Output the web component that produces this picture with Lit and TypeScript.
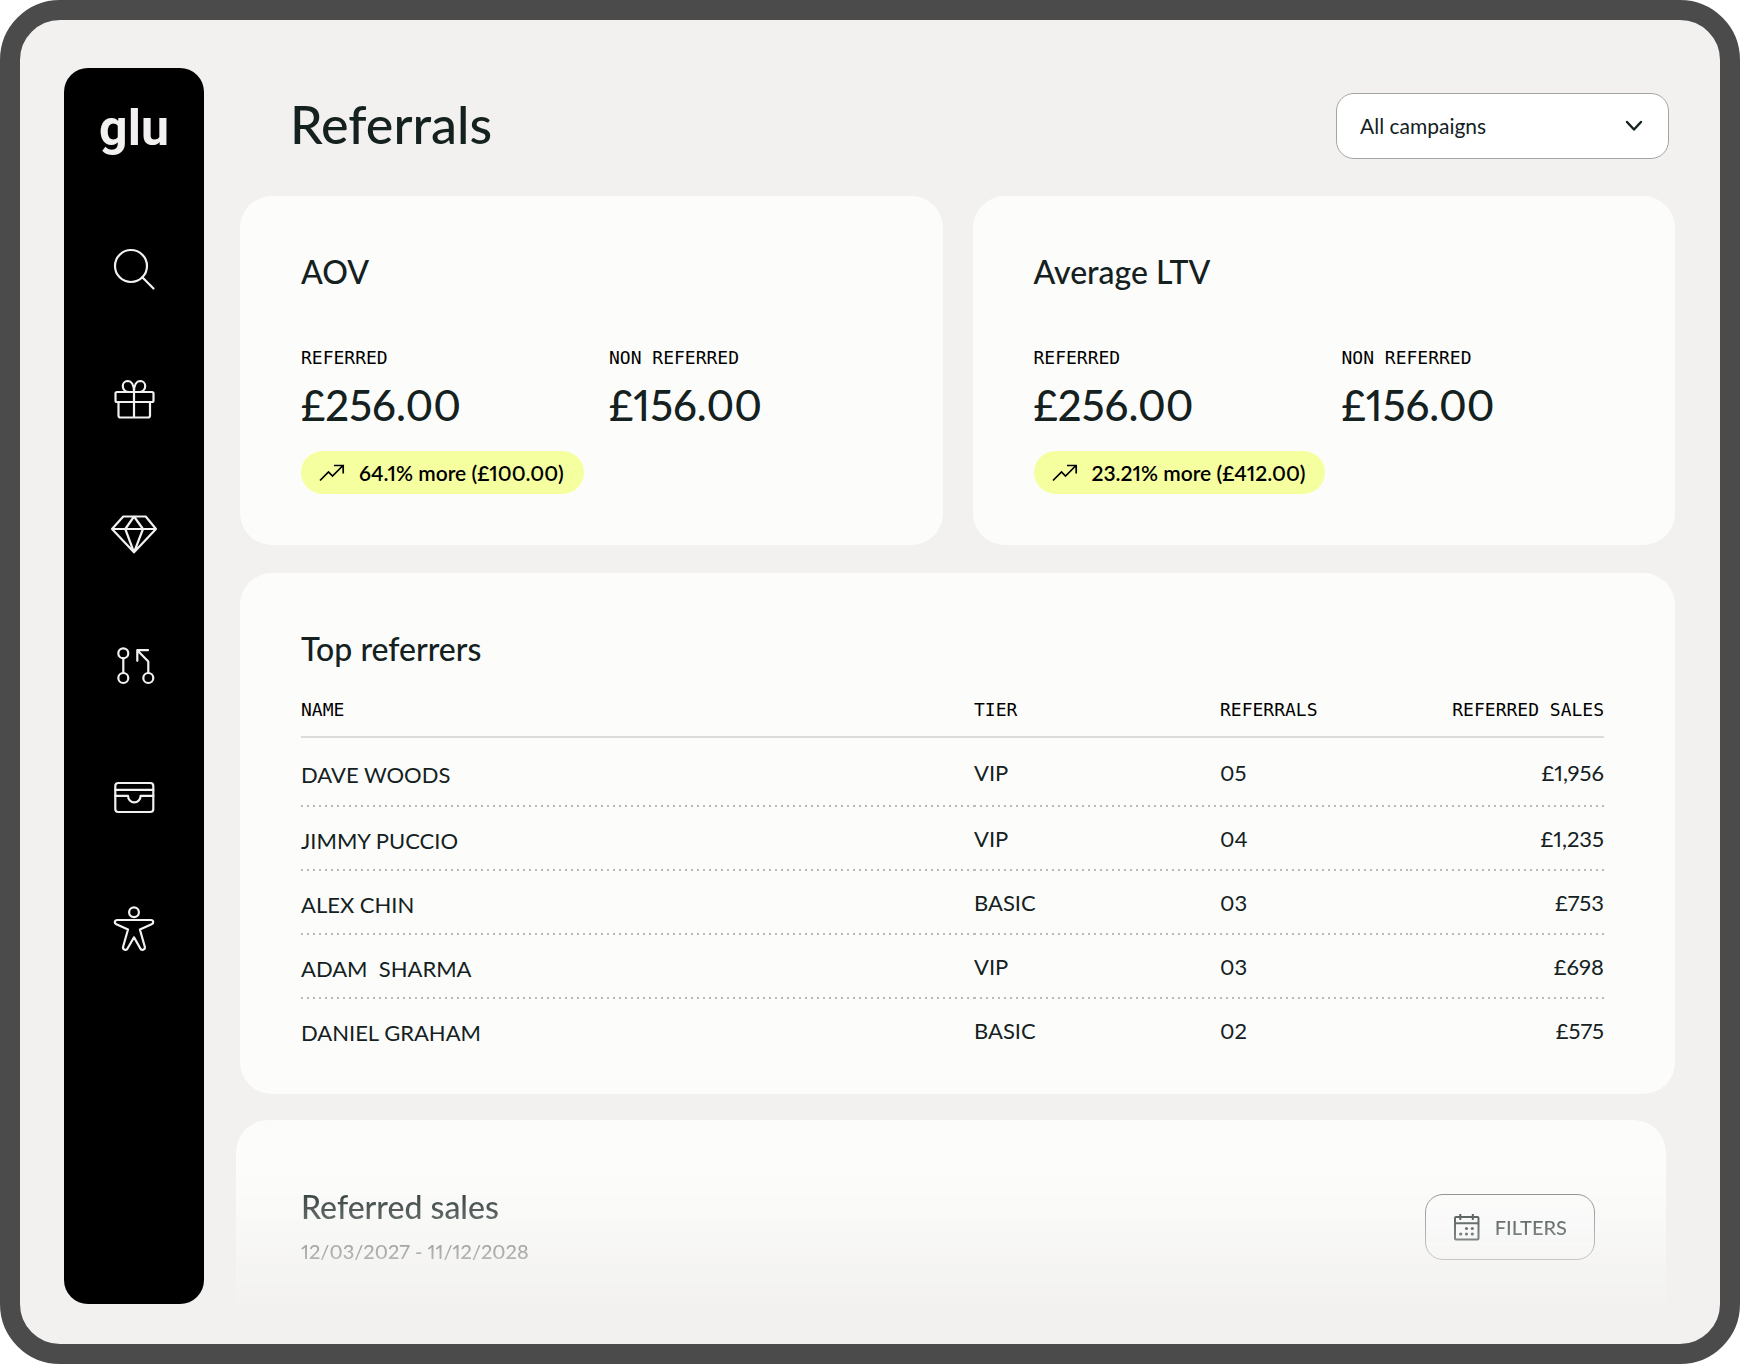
import { LitElement, html, svg, css } from "lit";
import { customElement, property } from "lit/decorators.js";

const icons = {
  search: svg`<circle cx="21" cy="21" r="16"/><path d="M32.3 32.3 43.5 43.5"/>`,
  gift: svg`<rect x="5.5" y="15" width="38" height="10" rx="1.5"/>
    <path d="M8.5 25v13.5a2 2 0 0 0 2 2h27.500a2 2 0 0 0 2-2V25M24 15v25.500"/>
    <path d="M24 15c0-7-2.500-11-6.500-11a5 5 0 0 0-4.700 5.200c0 3.300 2.700 5.800 6.700 5.800M24 15c0-7 2.500-11 6.500-11a5 5 0 0 1 4.700 5.200c0 3.300-2.700 5.800-6.700 5.800"/>`,
  diamond: svg`<path d="M13.300 7.500h22.400L46 20 24 43.300 2 20zM2 20h44M24 7.500 15.300 20 24 43.300 33 20z"/>`,
  flow: svg`<circle cx="13.300" cy="12.300" r="5"/><circle cx="13.300" cy="37" r="5"/><circle cx="38.300" cy="37" r="5"/>
    <path d="M13.300 17.300V32M38.300 32V20.500L27.500 9.500M38 9.200H27.300V19.800"/>`,
  wallet: svg`<rect x="5.300" y="10" width="38" height="29" rx="3"/>
    <path d="M5.300 16.800h38M5.300 22.800h12.700a6.300 6.600 0 0 0 12.600 0h12.700"/>`,
  person: svg`<circle cx="24" cy="7.300" r="4.900"/>
    <path d="M7.300 15h33.600c2.900 0 3 3.300.7 4.200L29.900 24.500l4.900 17.300c.7 3-3.300 4.300-4.600 1.500L24 32.300l-6.300 11c-1.400 2.800-5.300 1.500-4.600-1.500l4.900-17.300L6.400 19.200C4.100 18.300 4.400 15 7.300 15z"/>`,
};

const nav: { label: string; icon: keyof typeof icons }[] = [
  { label: "Search", icon: "search" },
  { label: "Rewards", icon: "gift" },
  { label: "Tiers", icon: "diamond" },
  { label: "Flows", icon: "flow" },
  { label: "Wallet", icon: "wallet" },
  { label: "Accessibility", icon: "person" },
];

const referrers = [
  { name: "DAVE WOODS", tier: "VIP", referrals: "05", sales: "£1,956" },
  { name: "JIMMY PUCCIO", tier: "VIP", referrals: "04", sales: "£1,235" },
  { name: "ALEX CHIN", tier: "BASIC", referrals: "03", sales: "£753" },
  { name: "ADAM  SHARMA", tier: "VIP", referrals: "03", sales: "£698" },
  { name: "DANIEL GRAHAM", tier: "BASIC", referrals: "02", sales: "£575" },
];

@customElement("side-nav")
class SideNav extends LitElement {
  static styles = css`
    :host {
      display: flex;
      flex-direction: column;
      align-items: center;
      box-sizing: border-box;
      width: 140px;
      padding-top: 28px;
      border-radius: 24px;
      background: #000;
      color: #f2f1f0;
    }
    .logo {
      color: inherit;
      text-decoration: none;
      font-family: Roboto, sans-serif;
      font-size: 50px;
      font-weight: 700;
      line-height: 64px;
    }
    .links {
      display: flex;
      flex-direction: column;
      gap: 84px;
      margin-top: 85px;
    }
    .link {
      display: block;
      width: 48px;
      height: 48px;
      color: inherit;
    }
    .icon {
      display: block;
      fill: none;
      stroke: currentColor;
      stroke-width: 2.2;
      stroke-linejoin: round;
      stroke-linecap: round;
    }
  `;
  render() {
    return html`
      <a class="logo" href="#home">glu</a>
      <nav class="links" aria-label="Main">
        ${nav.map(
          (n) => html`<a class="link" href="#${n.icon}" aria-label=${n.label}>
            <svg class="icon" width="48" height="48" viewBox="0 0 48 48" aria-hidden="true">${icons[n.icon]}</svg>
          </a>`,
        )}
      </nav>
    `;
  }
}

@customElement("stat-card")
class StatCard extends LitElement {
  @property() heading = "";
  @property() referred = "";
  @property() other = "";
  @property() change = "";

  static styles = css`
    :host {
      display: block;
      box-sizing: border-box;
      height: 349px;
      padding: 56px 61px 0;
      border-radius: 32px;
      background: #fcfdfb;
    }
    .heading {
      margin: 0 0 54px;
      font-size: 32px;
      font-weight: 500;
      line-height: 40px;
    }
    .figures {
      display: grid;
      grid-template-columns: 308px 1fr;
      margin: 0;
    }
    .label {
      font: 18px/24px "DejaVu Sans Mono", monospace;
      color: #000;
    }
    .value {
      margin: 9px 0 0;
      font-size: 42px;
      font-weight: 500;
      line-height: 52px;
    }
    .badge {
      display: inline-flex;
      align-items: center;
      gap: 14px;
      height: 43px;
      margin-top: 20px;
      padding: 0 20px 0 18px;
      border-radius: 22px;
      background: #f5ffa0;
      color: #000;
      font-size: 21px;
      font-weight: 600;
      white-space: nowrap;
    }
    .trend {
      fill: none;
      stroke: currentColor;
      stroke-width: 1.7;
    }
  `;
  render() {
    return html`
      <h2 class="heading">${this.heading}</h2>
      <dl class="figures">
        <div>
          <dt class="label">REFERRED</dt>
          <dd class="value">${this.referred}</dd>
        </div>
        <div>
          <dt class="label">NON REFERRED</dt>
          <dd class="value">${this.other}</dd>
        </div>
      </dl>
      <div class="badge">
        <svg class="trend" width="26" height="20" viewBox="0 0 26 20" aria-hidden="true">
          <path d="M1 17.500 9.500 9l4 4L24 2.500M15 2.500h9.200v8" />
        </svg>
        ${this.change}
      </div>
    `;
  }
}

@customElement("app-root")
class AppRoot extends LitElement {
  static styles = css`
    :host {
      display: block;
      background: #fff;
      color: #14211f;
      font-family: Lato, "Open Sans", sans-serif;
      font-variant-numeric: proportional-nums;
    }
    .frame {
      display: flex;
      gap: 36px;
      box-sizing: border-box;
      min-height: 100vh;
      padding: 48px 45px 0 44px;
      border: 20px solid #4b4b4b;
      border-radius: 60px;
      background: #f2f1f0;
    }
    .side {
      flex: none;
      margin-bottom: 40px;
    }
    .main {
      display: flex;
      flex: 1;
      flex-direction: column;
      min-width: 0;
    }
    .top {
      display: flex;
      align-items: flex-start;
      justify-content: space-between;
      margin: 25px 6px 37px 50px;
    }
    .title {
      margin: 0;
      font-size: 52px;
      font-weight: 500;
      line-height: 62px;
    }
    .picker {
      display: grid;
      align-items: center;
      width: 333px;
    }
    .select {
      grid-area: 1 / 1;
      height: 66px;
      padding: 0 60px 2px 23px;
      border: 1px solid #a3a5a3;
      border-radius: 18px;
      appearance: none;
      background: #fff;
      color: inherit;
      font: 21px Lato, sans-serif;
    }
    .chevron {
      grid-area: 1 / 1;
      justify-self: end;
      margin-right: 26px;
      fill: none;
      stroke: #14211f;
      stroke-width: 2.4;
      stroke-linecap: round;
      stroke-linejoin: round;
      pointer-events: none;
    }
    .stats {
      display: grid;
      grid-template-columns: 1fr 1fr;
      gap: 30px;
    }
    .card {
      border-radius: 32px;
      background: #fcfdfb;
    }
    .referrers {
      margin-top: 28px;
      padding: 56px 71px 33px 61px;
    }
    .heading {
      margin: 0;
      font-size: 32px;
      font-weight: 500;
      line-height: 40px;
    }
    .table {
      width: 100%;
      margin-top: 17px;
      border-collapse: collapse;
      table-layout: fixed;
    }
    .head {
      height: 46px;
      padding: 0 0 4px;
      border-bottom: 2px solid #dcdddb;
      color: #000;
      font: 18px "DejaVu Sans Mono", monospace;
      text-align: left;
    }
    .tier {
      width: 246px;
    }
    .count {
      width: 190px;
    }
    .sum {
      width: 194px;
    }
    .cell {
      height: 62px;
      padding: 2px 0 0;
      font-size: 22px;
    }
    .person {
      height: 58px;
      padding-top: 6px;
      text-align: left;
      font-weight: 400;
      white-space: pre;
    }
    .row + .row .cell {
      background: repeating-linear-gradient(90deg, #b9bbb9 0 2px, transparent 2px 6px) 0 0 / 100% 2px no-repeat;
    }
    .row:first-child .cell {
      height: 61px;
    }
    .right {
      text-align: right;
    }
    .sales {
      display: flex;
      flex: 1;
      align-items: flex-start;
      justify-content: space-between;
      margin: 26px 9px 0 -4px;
      padding: 67px 71px 0 65px;
      border-radius: 32px 32px 0 0;
      mask-image: linear-gradient(#000 48px, transparent 195px);
    }
    .dates {
      margin: 12px 0 0;
      color: #4c5654;
      font-size: 20px;
      font-weight: 500;
      line-height: 24px;
    }
    .filters {
      display: flex;
      align-items: center;
      gap: 14px;
      height: 66px;
      margin-top: 7px;
      padding: 0 27px;
      border: 1px solid #7c807e;
      border-radius: 18px;
      background: #fefefd;
      color: #14211f;
      font: 500 20px Lato, sans-serif;
    }
    .calendar {
      fill: none;
      stroke: currentColor;
      stroke-width: 2;
    }
    .dot {
      fill: currentColor;
      stroke: none;
    }
  `;
  render() {
    return html`
      <div class="frame">
        <side-nav class="side"></side-nav>
        <main class="main">
          <header class="top">
            <h1 class="title">Referrals</h1>
            <div class="picker">
              <select class="select" aria-label="Campaign">
                <option>All campaigns</option>
              </select>
              <svg class="chevron" width="18" height="12" viewBox="0 0 18 12" aria-hidden="true">
                <path d="M2 2l7 7.500L16 2" />
              </svg>
            </div>
          </header>
          <div class="stats">
            <stat-card heading="AOV" referred="£256.00" other="£156.00" change="64.1% more (£100.00)"></stat-card>
            <stat-card heading="Average LTV" referred="£256.00" other="£156.00" change="23.21% more (£412.00)"></stat-card>
          </div>
          <section class="card referrers">
            <h2 class="heading">Top referrers</h2>
            <table class="table">
              <thead>
                <tr>
                  <th class="head" scope="col">NAME</th>
                  <th class="head tier" scope="col">TIER</th>
                  <th class="head count" scope="col">REFERRALS</th>
                  <th class="head sum right" scope="col">REFERRED SALES</th>
                </tr>
              </thead>
              <tbody>
                ${referrers.map(
                  (r) => html`<tr class="row">
                    <th class="cell person" scope="row">${r.name}</th>
                    <td class="cell">${r.tier}</td>
                    <td class="cell">${r.referrals}</td>
                    <td class="cell right">${r.sales}</td>
                  </tr>`,
                )}
              </tbody>
            </table>
          </section>
          <section class="card sales">
            <div>
              <h2 class="heading">Referred sales</h2>
              <p class="dates">12/03/2027 - 11/12/2028</p>
            </div>
            <button class="filters" type="button">
              <svg class="calendar" width="28" height="28" viewBox="0 0 28 28" aria-hidden="true">
                <rect x="2" y="4" width="23.500" height="22.500" rx="1" />
                <path d="M2 10.300h23.500M7.300 1v6M19.800 1v6" />
                <g class="dot">
                  <circle cx="13.500" cy="15.500" r="1.600" /><circle cx="19.300" cy="15.500" r="1.600" />
                  <circle cx="7.700" cy="21" r="1.600" /><circle cx="13.500" cy="21" r="1.600" />
                  <circle cx="19.300" cy="21" r="1.600" />
                </g>
              </svg>
              FILTERS
            </button>
          </section>
        </main>
      </div>
    `;
  }
}
